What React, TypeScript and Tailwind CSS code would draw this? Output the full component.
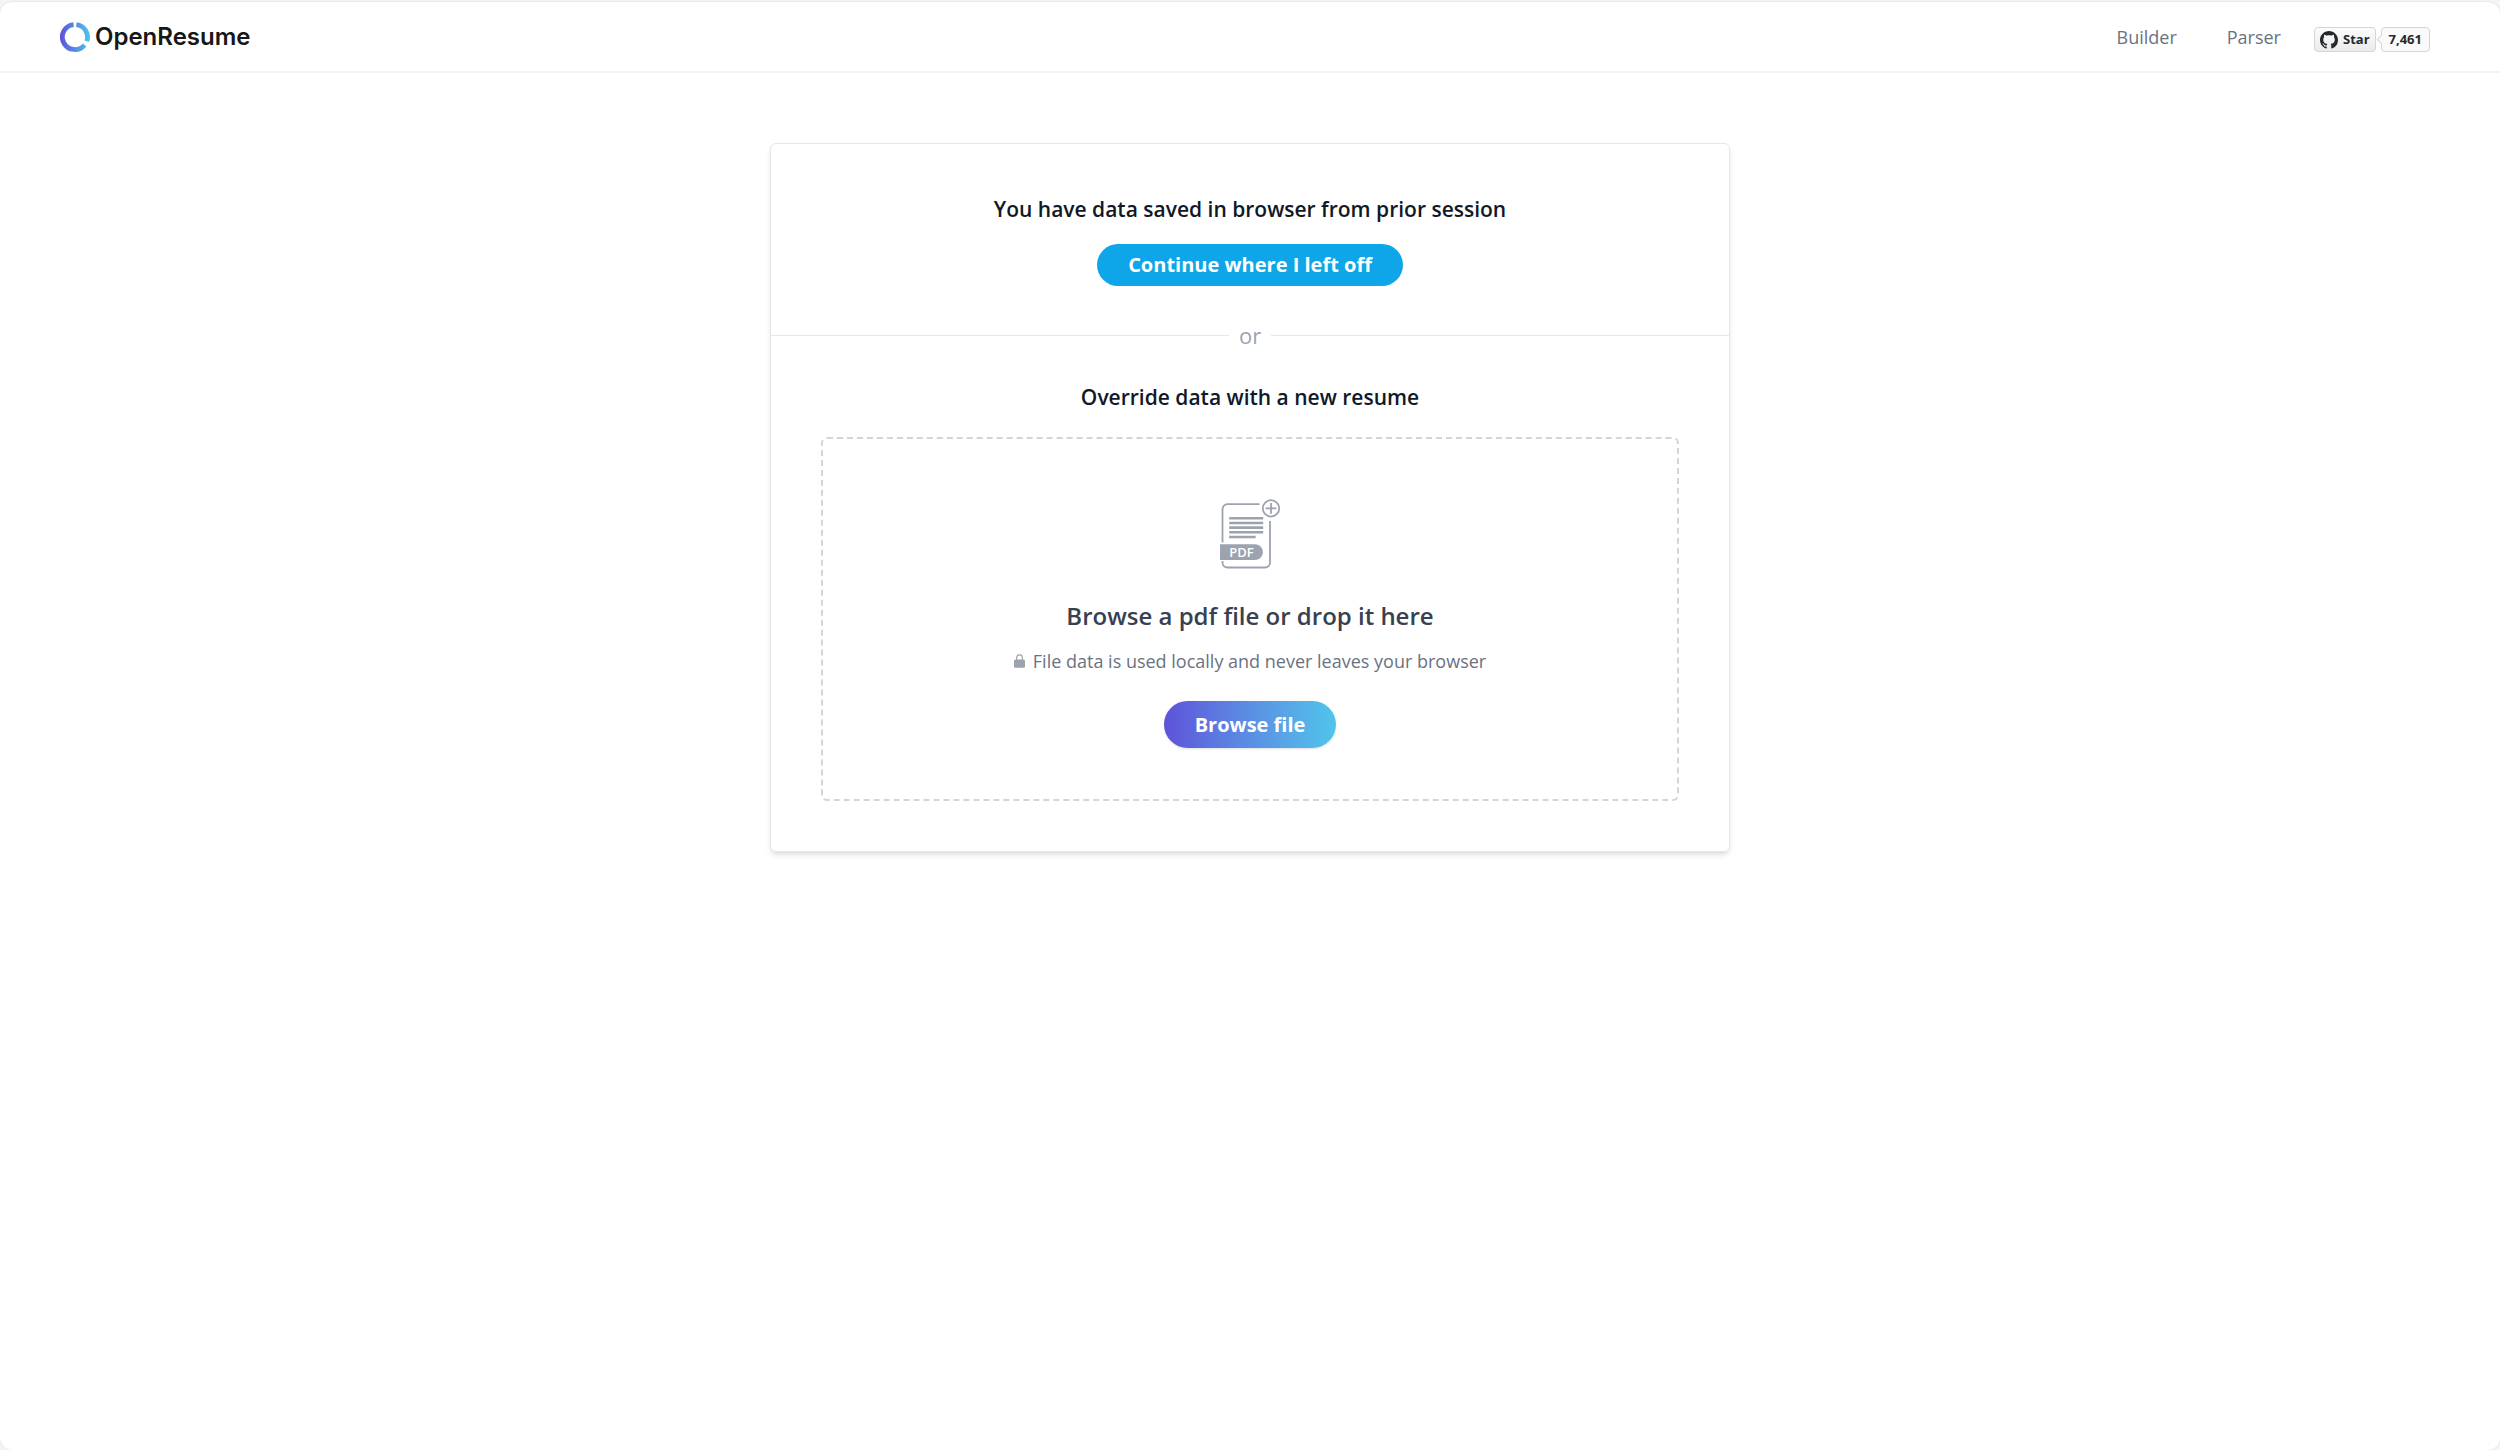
function Logo() {
  return (
    <svg className="h-[30px] w-[30px]" viewBox="0 0 30 30" fill="none" aria-hidden="true">
      <defs>
        <linearGradient id="logo" x1="0" y1="15" x2="30" y2="15" gradientUnits="userSpaceOnUse">
          <stop stopColor="#5d52d9" />
          <stop offset="1" stopColor="#4fc5eb" />
        </linearGradient>
      </defs>
      <path
        d="M13.6 2.6A12.5 12.5 0 1 0 24.6 22.9M16.4 2.6A12.5 12.5 0 0 1 26.8 19.3"
        stroke="url(#logo)"
        strokeWidth="4.8"
      />
    </svg>
  );
}

function GitHubMark() {
  return (
    <svg className="h-[18px] w-[18px]" viewBox="0 0 16 16" fill="#24292f" aria-hidden="true">
      <path d="M8 0C3.58 0 0 3.58 0 8c0 3.54 2.29 6.53 5.47 7.59.4.07.55-.17.55-.38 0-.19-.01-.82-.01-1.49-2.01.37-2.53-.49-2.69-.94-.09-.23-.48-.94-.82-1.13-.28-.15-.68-.52-.01-.53.63-.01 1.08.58 1.23.82.72 1.21 1.87.87 2.33.66.07-.52.28-.87.51-1.07-1.78-.2-3.64-.89-3.64-3.95 0-.87.31-1.59.82-2.15-.08-.2-.36-1.02.08-2.12 0 0 .67-.21 2.2.82.64-.18 1.32-.27 2-.27s1.36.09 2 .27c1.53-1.04 2.2-.82 2.2-.82.44 1.1.16 1.92.08 2.12.51.56.82 1.27.82 2.15 0 3.07-1.87 3.75-3.65 3.95.29.25.54.73.54 1.48 0 1.07-.01 1.93-.01 2.2 0 .21.15.46.55.38A8.01 8.01 0 0 0 16 8c0-4.42-3.58-8-8-8Z" />
    </svg>
  );
}

function LockIcon() {
  return (
    <svg className="h-[14px] w-[11px] text-[#9ca3af]" viewBox="0 0 11 14" fill="none" aria-hidden="true">
      <path d="M2.6 7V3.8a2.9 2.9 0 0 1 5.8 0V7" stroke="currentColor" strokeWidth="1.2" />
      <rect y="5.6" width="11" height="8.2" rx="1.5" fill="currentColor" />
    </svg>
  );
}

function AddPdfIcon() {
  return (
    <svg className="h-[70px] w-[62px] text-[#9ca3af]" viewBox="0 0 62 70" fill="none" aria-hidden="true">
      <g stroke="currentColor" strokeWidth="1.8">
        <path d="M40.5 5.2H8.5a5 5 0 0 0-5 5V43.5M3.5 62v1.5a5 5 0 0 0 5 5H46a5 5 0 0 0 5-5V22" />
        <circle cx="52" cy="9.4" r="8.2" />
        <path d="M52 4v10.8M46.6 9.4h10.8" />
        <path d="M10.2 19.3h34M10.2 24h34M10.2 28.6h34M10.2 33.3h34M10.2 38h26.5" strokeWidth="2.6" />
      </g>
      <path d="M1 45.3h35a7.9 7.9 0 0 1 0 15.8H1z" fill="currentColor" />
      <text
        x="22.5"
        y="58"
        textAnchor="middle"
        className="fill-white font-['Open_Sans'] text-[13px] font-semibold"
      >
        PDF
      </text>
    </svg>
  );
}

function TopNavBar() {
  return (
    <header className="flex h-[71px] items-center justify-between border-b-2 border-gray-100 pr-[70px] pl-[60px]">
      <a
        href="#home"
        className="flex items-center gap-[5px] font-[Inter,sans-serif] text-[24px] leading-8 font-semibold text-neutral-900"
      >
        <Logo />
        OpenResume
      </a>
      <nav aria-label="Site" className="flex items-center text-[18px] leading-7 text-[#6b7280]">
        <a href="#builder" className="px-[25px] hover:text-gray-900">
          Builder
        </a>
        <a href="#parser" className="px-[25px] hover:text-gray-900">
          Parser
        </a>
        <div className="mt-[6px] ml-2 flex h-[25px] items-stretch gap-[5px] text-[13px] leading-[23px] font-bold text-[#24292f]">
          <a
            href="#star"
            className="flex items-center gap-[5px] rounded border border-gray-300 bg-linear-to-b from-[#fcfcfc] to-[#ebebeb] px-[5px]"
          >
            <GitHubMark />
            Star
          </a>
          <a href="#stargazers" className="relative rounded border border-gray-300 bg-[#fafafa] px-[7px]">
            <span className="absolute top-2 -left-1 h-[7px] w-[7px] rotate-45 border-b border-l border-gray-300 bg-[#fafafa]" />
            7,461
          </a>
        </div>
      </nav>
    </header>
  );
}

function ResumeDropzone() {
  return (
    <div className="mt-[25px] flex flex-col items-center rounded-md border-2 border-dashed border-gray-300 pt-[60px] pb-[51px]">
      <AddPdfIcon />
      <p className="mt-7 text-[24px] leading-[38px] font-semibold text-[#374151]">
        Browse a pdf file or drop it here
      </p>
      <p className="mt-[11px] flex items-center gap-2 text-[18px] leading-[30px] text-[#6b7280]">
        <LockIcon />
        File data is used locally and never leaves your browser
      </p>
      <button
        type="button"
        className="mt-[25px] rounded-full bg-linear-to-r from-[#5d52d9] to-[#4fc5eb] px-[31px] py-[9px] text-[20px] leading-[29px] font-bold text-white shadow-sm"
      >
        Browse file
      </button>
    </div>
  );
}

export default function App() {
  return (
    <div className="min-h-screen bg-neutral-100 pt-[2px] font-['Open_Sans','Noto_Sans',sans-serif] text-[#111827]">
      <div className="min-h-[calc(100vh-2px)] rounded-[12px] bg-white shadow-[0_0_2px_rgba(0,0,0,0.15)]">
        <TopNavBar />
        <main className="mx-auto mt-[70px] w-full max-w-[960px] rounded-md border border-gray-200 px-[50px] py-[50px] text-center shadow-md">
          <h1 className="text-[21px] leading-[30px] font-semibold">
            You have data saved in browser from prior session
          </h1>
          <a
            href="#continue"
            className="mt-5 inline-block rounded-full bg-[#0ea5e9] px-[31px] py-[6px] text-[20px] leading-[30px] font-bold text-white"
          >
            Continue where I left off
          </a>
          <div className="-mx-[50px] mt-[31px] flex items-center gap-[10px] text-[22px] leading-[36px] text-[#9ca3af]">
            <hr className="grow border-gray-200" />
            or
            <hr className="grow border-gray-200" />
          </div>
          <h2 className="mt-[29px] text-[21px] leading-[30px] font-semibold">Override data with a new resume</h2>
          <ResumeDropzone />
        </main>
      </div>
    </div>
  );
}
